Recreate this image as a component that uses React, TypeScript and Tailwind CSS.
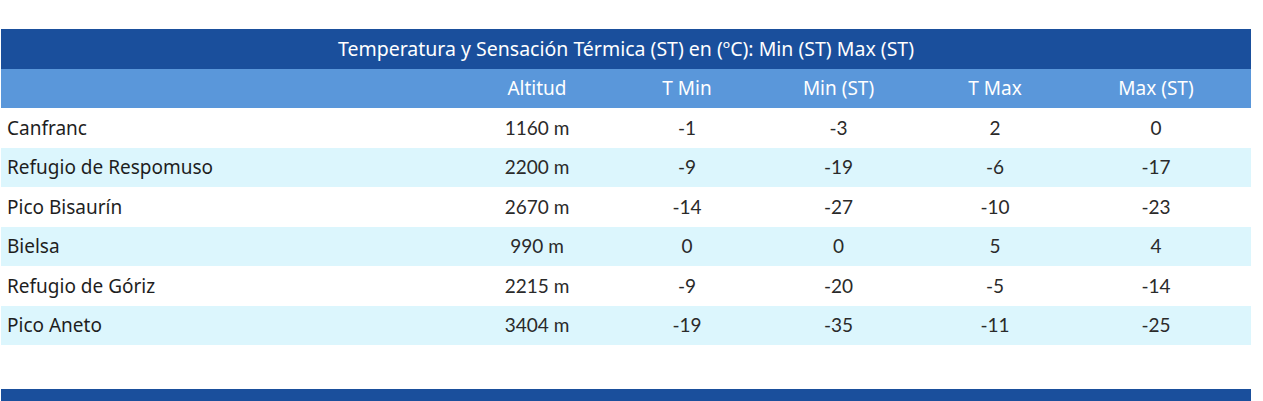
import React from 'react'

interface Row {
  name: string
  alt: string
  tmin: string
  stmin: string
  tmax: string
  stmax: string
}

const rows: Row[] = [
  { name: 'Canfranc', alt: '1160 m', tmin: '-1', stmin: '-3', tmax: '2', stmax: '0' },
  { name: 'Refugio de Respomuso', alt: '2200 m', tmin: '-9', stmin: '-19', tmax: '-6', stmax: '-17' },
  { name: 'Pico Bisaurín', alt: '2670 m', tmin: '-14', stmin: '-27', tmax: '-10', stmax: '-23' },
  { name: 'Bielsa', alt: '990 m', tmin: '0', stmin: '0', tmax: '5', stmax: '4' },
  { name: 'Refugio de Góriz', alt: '2215 m', tmin: '-9', stmin: '-20', tmax: '-5', stmax: '-14' },
  { name: 'Pico Aneto', alt: '3404 m', tmin: '-19', stmin: '-35', tmax: '-11', stmax: '-25' },
]

const cols = 'grid grid-cols-[461px_150px_150px_153px_160px_176px]'
const plex = { fontFamily: '"Noto Sans", "Open Sans", sans-serif' }
const lato = { fontFamily: 'Lato, sans-serif' }

export default function App() {
  return (
    <div className="w-[1263px] h-[401px] bg-white overflow-hidden text-[#1e1e1e]" style={plex}>
      <div className="pt-[29px] pl-px w-[1251px]">
        <div className="h-[40px] bg-[#1a4f9c] text-white text-[19.5px] flex items-center justify-center">
          Temperatura y Sensación Térmica (ST) en (ºC): Min (ST) Max (ST)
        </div>
        <div className={`${cols} h-[39px] bg-[#5a97da] text-white text-[19px] items-center`}>
          <div />
          <div className="text-center">Altitud</div>
          <div className="text-center">T Min</div>
          <div className="text-center">Min (ST)</div>
          <div className="text-center">T Max</div>
          <div className="text-center pr-[14px]">Max (ST)</div>
        </div>
        {rows.map((r, i) => (
          <div
            key={r.name}
            className={`${cols} h-[39.5px] items-center text-[19px] ${i % 2 ? 'bg-[#dcf6fd]' : 'bg-white'}`}
          >
            <div className="pl-[6px]">{r.name}</div>
            <div className="text-center text-[#2a2a2a]" style={lato}>{r.alt}</div>
            <div className="text-center text-[#2a2a2a]" style={lato}>{r.tmin}</div>
            <div className="text-center text-[#2a2a2a]" style={lato}>{r.stmin}</div>
            <div className="text-center text-[#2a2a2a]" style={lato}>{r.tmax}</div>
            <div className="text-center text-[#2a2a2a] pr-[14px]" style={lato}>{r.stmax}</div>
          </div>
        ))}
        <div className="h-[44px]" />
        <div className="h-[40px] bg-[#1a4f9c]" />
      </div>
    </div>
  )
}
